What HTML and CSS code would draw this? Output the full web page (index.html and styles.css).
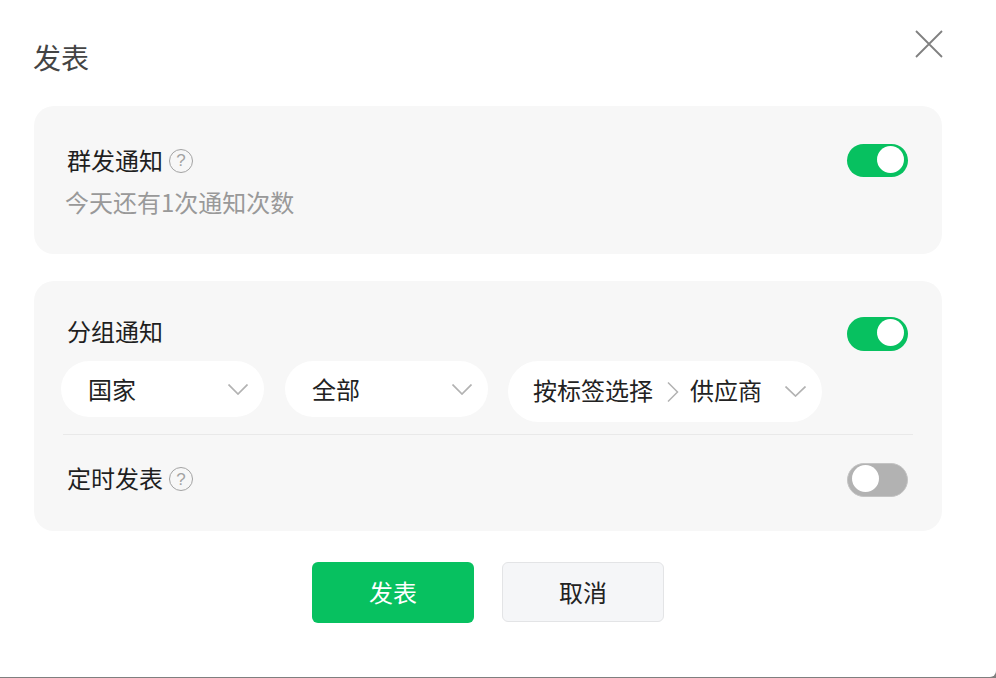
FILE: index.html
```html
<!DOCTYPE html>
<html lang="zh-CN">
<head>
<meta charset="utf-8">
<title>发表</title>
<link rel="stylesheet" href="styles.css">
</head>
<body>
<div class="modal">
  <svg class="close" width="28" height="28" viewBox="0 0 28 28" aria-label="关闭"><path d="M1 1 27 27M27 1 1 27" fill="none" stroke="#808080" stroke-width="1.8"/></svg>
  <h1 class="title">发表</h1>

  <section class="panel panel-mass">
    <div class="row">
      <div class="label">群发通知<span class="help">?</span></div>
      <span class="toggle on"><i class="knob"></i></span>
    </div>
    <p class="hint">今天还有1次通知次数</p>
  </section>

  <section class="panel panel-group">
    <div class="row row-group">
      <div class="label">分组通知</div>
      <span class="toggle on"><i class="knob"></i></span>
    </div>
    <div class="selects">
      <div class="select">
        <span class="value">国家</span>
        <svg class="chev" width="20" height="11" viewBox="0 0 20 11"><path d="M.5.5 10 10 19.500.5" fill="none" stroke="#b2b2b2" stroke-width="1.7"/></svg>
      </div>
      <div class="select">
        <span class="value">全部</span>
        <svg class="chev" width="20" height="11" viewBox="0 0 20 11"><path d="M.5.5 10 10 19.500.5" fill="none" stroke="#b2b2b2" stroke-width="1.7"/></svg>
      </div>
      <div class="select select-wide">
        <span class="value">按标签选择</span>
        <svg class="crumb" width="12" height="20" viewBox="0 0 12 20"><path d="M1 .5 10.500 10 1 19.500" fill="none" stroke="#b2b2b2" stroke-width="1.5"/></svg>
        <span class="value">供应商</span>
        <svg class="chev chev-wide" width="21" height="11" viewBox="0 0 21 11"><path d="M.5.5 10.500 10 20.500.5" fill="none" stroke="#b2b2b2" stroke-width="1.7"/></svg>
      </div>
    </div>
    <div class="divider"></div>
    <div class="row row-timed">
      <div class="label">定时发表<span class="help">?</span></div>
      <span class="toggle off"><i class="knob"></i></span>
    </div>
  </section>

  <div class="actions">
    <button class="btn primary" type="button">发表</button>
    <button class="btn ghost" type="button">取消</button>
  </div>
</div>
</body>
</html>
```

FILE: styles.css
```css
* { box-sizing: border-box; }
html, body { margin: 0; height: 100%; }
body {
  background: #7f7f7f;
  overflow: hidden;
  font-family: "Noto Sans CJK SC", "Noto Sans", sans-serif;
  color: #1f1f1f;
}
.modal {
  position: relative;
  width: 996px;
  height: 677px;
  padding: 0 54px 0 34px;
  background: #fff;
  border-radius: 0 0 6px 0;
}
.close { position: absolute; top: 30px; left: 915px; }
.title {
  margin: 0 0 0 -1px;
  height: 106px;
  padding-top: 37px;
  font-size: 28px;
  line-height: 40px;
  font-weight: 400;
  color: #444;
}
.panel {
  background: #f7f7f7;
  border-radius: 20px;
  padding: 0 34px 0 27px;
}
.panel-mass { height: 148px; padding-top: 38px; margin-bottom: 27px; }
.panel-group { height: 250px; padding-top: 36px; }
.row {
  display: flex;
  justify-content: space-between;
  align-items: center;
  padding-left: 6px;
  height: 33px;
}
.row-timed { margin-top: 28px; }
.label {
  display: flex;
  align-items: center;
  font-size: 24px;
  line-height: 33px;
  font-weight: 400;
  margin-bottom: 2px;
}
.row-group .label { margin-bottom: 7px; }
.row-timed .label { margin-bottom: 5px; }
.help {
  display: flex;
  align-items: center;
  justify-content: center;
  width: 24px;
  height: 24px;
  margin: 2px 0 0 6px;
  border: 1.5px solid #a3a3a3;
  border-radius: 50%;
  font-family: "Liberation Sans", sans-serif;
  font-size: 17px;
  line-height: 1;
  color: #a3a3a3;
}
.row-timed .help { margin-top: 4px; }
.hint {
  margin: 8px 0 0 4px;
  font-size: 24px;
  line-height: 33px;
  color: #999;
}
.toggle {
  display: flex;
  align-items: center;
  width: 61px;
  height: 33px;
  padding: 0 4px 2px;
  border-radius: 17px;
  flex: none;
}
.row-group .toggle { height: 34px; }
.row-timed .toggle { height: 34px; }
.toggle.on { background: #07c160; justify-content: flex-end; }
.toggle.off { background: #b2b2b2; border: 1px solid #c4c4c4; }
.knob { width: 27px; height: 27px; border-radius: 50%; background: #fff; display: block; }
.selects {
  display: flex;
  align-items: flex-start;
  gap: 21px;
  margin-top: 11px;
}
.select {
  display: flex;
  align-items: center;
  justify-content: space-between;
  width: 203px;
  height: 56px;
  padding: 0 16px 0 27px;
  background: #fff;
  border-radius: 28px;
  font-size: 24px;
  line-height: 33px;
  color: #222;
}
.value { margin-bottom: 2px; }
.select-wide {
  width: 314px;
  height: 61px;
  border-radius: 31px;
  margin-left: -1px;
  padding: 0 16px 0 25px;
  justify-content: flex-start;
}
.select-wide .value { margin-bottom: 4px; }
.crumb { margin: 0 11px 0 14px; flex: none; }
.chev-wide { margin-left: auto; }
.divider {
  height: 1px;
  background: #e9e9e9;
  margin: 12px -5px 0 2px;
}
.actions {
  display: flex;
  gap: 28px;
  margin: 31px 0 0 278px;
  align-items: flex-start;
}
.btn {
  width: 162px;
  font-family: inherit;
  font-size: 24px;
  border-radius: 6px;
  padding: 0 0 2px;
}
.primary { height: 61px; background: #07c160; color: #fff; border: 0; }
.ghost { height: 60px; background: #f5f6f8; color: #222; border: 1px solid #e3e4e6; }
```
